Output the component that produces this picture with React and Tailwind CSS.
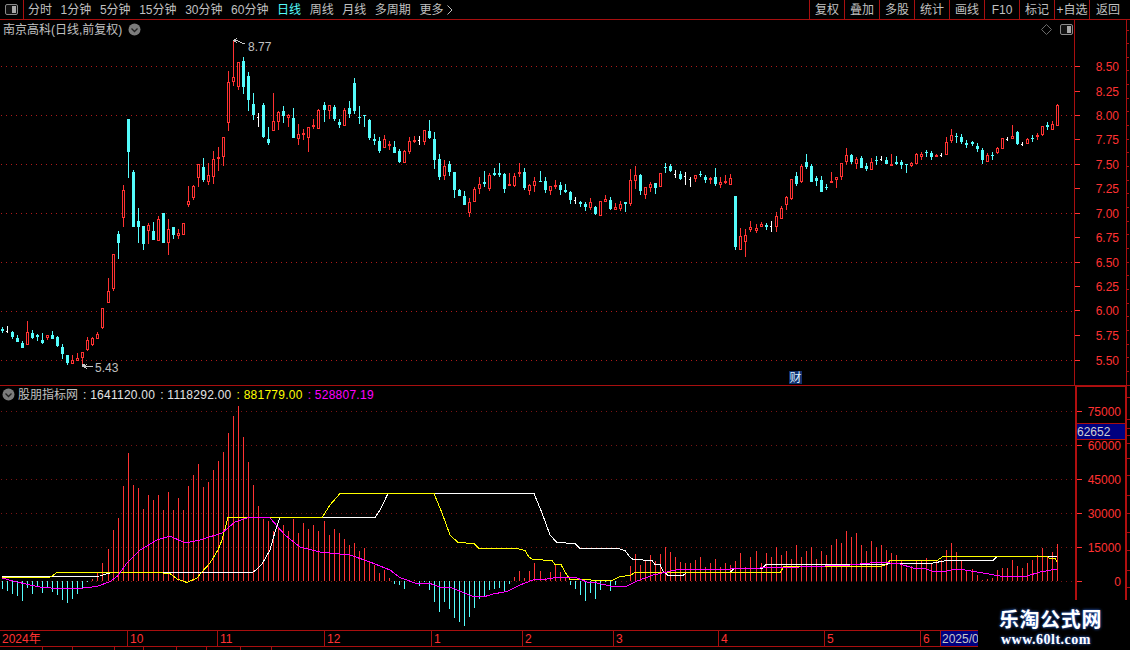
import React from "react";

const RED = "#ff3232";
const CYAN = "#54fcfc";
const LINE = "#a80f0f";

// [type, high, bodyTop, bodyBottom, low] in page pixels; c cyan, r hollow red, s solid red, w white doji
const C = [
["c",327,329,331,333],["w",326,331,332,333],["c",331,332,337,339],["c",335,338,342,342],["c",341,343,348,348],["r",321,332,345,345],["c",330,333,338,339],["c",334,335,337,341],["c",333,340,343,344],["r",335,335,338,340],["c",331,335,339,339],["c",336,337,346,347],["c",344,347,354,359],["c",355,355,363,365],["r",355,360,364,364],["r",353,358,361,361],["r",352,352,358,367],["r",337,340,350,351],["r",337,338,345,346],["r",332,334,339,339],["r",308,308,328,329],
["r",278,291,303,303],["r",254,254,289,291],["c",231,234,243,259],["r",185,190,218,227],["c",119,119,152,178],["c",170,172,227,227],["c",208,221,227,243],["c",226,226,244,250],["r",223,225,231,244],["c",222,231,240,240],["r",216,219,241,241],["c",213,213,243,243],["r",219,229,243,255],["c",227,227,235,239],["r",229,233,236,239],["r",223,223,235,235],["r",186,201,205,207],["r",185,186,198,200],["r",164,164,178,187],["c",158,167,180,182],["r",163,175,182,185],["r",151,159,177,184],["r",147,157,159,171],["r",137,137,157,166],["r",71,82,123,131],["r",40,77,82,86],["r",62,62,87,90],["c",57,61,87,94],["c",72,76,100,111],["c",93,104,115,120],["w",113,117,118,127],["c",103,105,137,138],["c",127,139,143,145],["r",93,121,131,131],["r",111,112,122,130],
["c",106,111,116,123],["r",114,115,118,127],["c",108,118,138,138],["r",124,134,139,145],["r",129,133,135,140],["r",127,127,138,152],["r",119,125,127,129],["r",109,110,129,129],
["c",102,105,110,122],["r",105,105,111,119],["c",105,107,119,121],["c",119,122,125,128],["r",108,110,126,126],["c",101,108,114,118],["c",78,83,111,114],["c",106,117,118,124],["c",115,115,116,127],["c",119,120,138,140],["c",134,139,141,145],["c",137,141,151,153],["r",135,139,148,148],["r",141,144,146,150],["c",141,147,153,153],["c",149,151,162,163],["r",150,151,163,163],["r",137,141,152,154],["r",136,140,142,143],["w",136,140,141,145],["r",130,130,142,145],["c",120,131,138,139],["c",132,139,160,169],["c",154,159,177,180],["r",160,166,176,180],["c",161,164,172,176],["c",172,172,190,198],["c",189,190,196,196],["c",191,196,205,205],["r",198,202,213,217],["r",187,189,202,202],["r",177,184,189,194],["c",171,182,184,187],["r",173,175,189,191],["c",168,173,175,176],["c",163,173,175,177],["c",173,174,189,193],["s",173,184,186,186],["r",173,176,186,187],["r",163,172,174,177],["c",168,172,188,190],["r",184,185,191,195],["r",177,181,186,192],
["c",171,181,182,182],["c",177,181,190,193],["r",186,186,191,195],["r",180,185,187,189],["c",182,185,190,195],["c",184,190,192,193],["c",191,192,200,204],["w",197,200,201,204],["c",201,202,204,207],
["c",202,204,207,211],["r",198,202,208,210],["c",206,207,214,215],["r",201,201,216,216],["r",195,199,202,202],["c",197,200,209,210],["r",203,207,210,210],["r",201,204,209,211],["c",202,202,204,212],["r",169,180,204,206],["r",166,175,181,189],["c",174,175,191,195],["r",187,187,195,199],["r",182,184,188,192],["c",183,183,188,194],["r",173,173,187,187],["c",163,167,168,173],["c",164,166,171,172],["w",170,174,175,178],["c",171,174,179,180],["w",172,176,177,185],["w",177,179,180,187],["r",175,175,179,182],["c",171,174,175,177],["c",175,177,180,183],["s",177,178,180,184],["c",168,177,184,186],["r",177,182,185,188],["s",175,181,183,184],["r",174,178,185,185],["c",196,196,247,250],["r",228,236,250,250],["r",229,235,242,257],["r",221,227,230,232],
["r",224,228,231,233],["r",222,224,227,227],["c",223,225,227,230],["w",221,226,227,232],["r",212,216,227,232],["r",206,208,219,219],["r",196,197,205,210],["r",179,179,199,200],["c",172,176,184,186],["r",164,166,182,183],["c",154,162,167,169],["c",164,166,182,182],["c",176,178,181,186],["c",176,180,192,192],["c",184,187,188,190],
["s",172,181,183,183],["r",177,177,180,188],["r",163,163,177,180],["r",148,155,162,165],["c",154,155,162,164],["r",157,159,164,169],["c",156,158,168,168],["c",163,166,169,171],["r",158,162,170,170],["c",156,160,161,165],["w",156,159,160,161],["c",157,160,164,164],["s",154,164,166,166],["c",156,162,164,165],["c",160,162,165,169],["c",164,164,165,173],["r",162,163,166,167],["r",153,154,164,164],["r",152,154,157,160],["c",150,152,153,157],["c",151,153,157,160],["s",154,155,157,157],["w",153,155,156,157],["r",137,142,155,155],["r",129,135,141,143],["c",133,136,137,143],["c",134,137,142,144],["c",140,143,145,148],
["c",141,142,144,146],["c",143,146,149,152],["c",148,150,160,164],["r",153,155,162,162],["c",152,155,156,160],["r",147,148,153,154],["r",138,138,149,149],["w",137,139,140,141],["r",125,136,139,139],["c",131,132,144,145],["w",142,144,145,146],["r",138,139,144,144],["c",135,138,139,142],["r",133,135,137,140],["r",126,126,135,136],["c",122,125,127,130],["r",121,124,130,130],["r",104,105,126,126],
];

const B = [-8,-10,-13,-15,-20,-7,-13,-6,-12,-6,-11,-14,-19,-22,-18,-13,-7,-1,2,8,18,
32,51,63,95,128,96,93,72,86,81,86,71,89,71,83,71,95,106,117,94,99,111,120,129,148,165,175,144,119,96,75,62,60,50,54,
56,50,62,48,58,52,56,50,60,46,52,48,42,36,38,30,33,20,16,8,11,3,-3,-4,
-8,-1,1,-5,-1,-9,-21,-31,-21,-28,-37,-41,-45,-36,-27,-18,-16,-9,-8,-7,-11,-3,4,10,3,10,18,10,3,9,16,9,3,-4,-8,-14,-20,-12,-18,-9,-1,-10,-4,0,0,15,27,16,20,26,20,27,34,29,24,19,18,18,21,
24,14,18,22,14,18,16,20,28,14,24,30,18,28,24,34,26,30,22,36,24,30,34,22,30,26,36,42,38,50,44,48,36,30,40,34,
36,31,28,26,20,13,15,20,20,23,17,20,21,31,38,29,20,11,12,6,1,2,3,11,13,13,21,15,13,18,21,26,33,25,29,37];

const xAt = (i) => 2 + 5 * i + (i >= 193 ? 5 : i >= 150 ? 4 : i >= 107 ? 3 : i >= 64 ? 2 : i >= 21 ? 1 : 0);

const WHITE = "2,577 100,576 106,574 112,572.5 252,572.5 256,570 262,564 270,550 275,532 280,517.5 375,517.5 380,510 388,493.5 534,493.5 542,513 550,535 557,542.5 575,543.5 580,548.5 618,548.5 625,550.5 630,557 633,559.5 652,560.5 655,564.5 660,564.5 663,571 668,575.5 683,575.5 687,572.5 730,572.5 734,568.5 762,568.5 766,564.5 885,564.5 890,563.5 930,563.5 947,560.5 993,560.5 997,556.5 1057,556.5";
const YELLOW = "2,577 50,577 52,576 57,572.5 155,572.5 170,573.5 177,579 187,582.5 197,578 201,573 210,563 218,550 222,540 226,525 228,517.5 322,517.5 330,505 340,493.5 434,493.5 442,513 450,535 458,542.5 474,543.5 479,548.5 517,548.5 525,550.5 529,557 533,559.5 552,560.5 555,564.5 561,564.5 565,572 570,579.5 612,580.5 620,576.5 630,575.5 635,572.5 780,572.5 784,566.5 880,566.5 885,565 890,560.5 937,560.5 943,556.5 1047,556.5 1050,558.5 1055,558.5 1057,561.5";
const MAGENTA = "2,578 15,581.5 30,585 43,587.5 67,589 83,588 97,586.5 110,581.5 117,576.5 127,563 140,550 157,540 170,536 185,543 200,540 222,533 235,522 250,517 270,518 285,535 300,547 320,552 350,555 370,562 390,570 400,577.5 415,583 430,583.5 440,587 450,587 463,592.5 473,596.5 485,596.5 493,594 507,591.5 520,585 533,580 547,579 560,577 577,578 587,582 597,583 610,586 627,586 637,581 653,575 667,572 680,569 700,570 760,568 800,567 850,565 880,562 900,564 913,568 923,568 935,572 947,571 955,569 965,570 980,572.5 1000,576 1027,576 1040,572 1057,569";

const F = "[font-family:'Liberation_Sans','Noto_Sans_CJK_SC',sans-serif]";

function Candle({ c, i }) {
  const [t, hi, top, bot, lo] = c;
  const x = xAt(i);
  if (t === "w") {
    return (
      <g fill="#ffffff">
        <rect x={x} y={hi} width="1" height={lo - hi} />
        <rect x={x - 1} y={top} width="1" height="1" />
      </g>
    );
  }
  const col = t === "c" ? CYAN : RED;
  const h = Math.max(bot - top, 1);
  return (
    <g>
      {t === "r" ? (
        <>
          <rect x={x} y={hi} width="1" height={top - hi} fill={col} />
          <rect x={x} y={bot} width="1" height={lo - bot} fill={col} />
          <rect x={x - 0.5} y={top + 0.5} width="2" height={Math.max(h - 1, 1)} fill="#000" stroke={col} />
        </>
      ) : (
        <>
          <rect x={x} y={hi} width="1" height={lo - hi} fill={col} />
          <rect x={x - 1} y={top} width="3" height={h} fill={col} />
        </>
      )}
    </g>
  );
}

const Dots = ({ y, color, w = 1075 }) => (
  <line x1="1" x2={w} y1={y} y2={y} stroke={color} strokeDasharray="1 4" />
);

const Chevron = () => (
  <svg width="13" height="13" viewBox="0 0 13 13" className="shrink-0">
    <circle cx="6.5" cy="6.5" r="6" fill="#7c7c7c" />
    <path d="M3.5 5.5 L6.5 8.5 L9.5 5.5" fill="none" stroke="#222" strokeWidth="1.3" />
  </svg>
);

const PanelIcon = ({ cls }) => (
  <svg width="13" height="11" viewBox="0 0 13 11" className={cls}>
    <rect x="0.5" y="0.5" width="12" height="10" rx="1.5" fill="#111" stroke="#8a8a8a" />
    <rect x="7" y="2" width="4" height="7" fill="#a8a8a8" />
  </svg>
);

const leftTabs = ["分时", "1分钟", "5分钟", "15分钟", "30分钟", "60分钟", "日线", "周线", "月线", "多周期", "更多"];
const rightBtns = ["复权", "叠加", "多股", "统计", "画线", "F10", "标记", "+自选"];

const priceTicks = [["8.50",67],["8.25",92],["8.00",116],["7.75",140],["7.50",165],["7.25",189],["7.00",214],["6.75",238],["6.50",263],["6.25",287],["6.00",311],["5.75",336],["5.50",361]];
const volTicks = [["75000",411],["60000",445],["45000",479],["30000",513],["15000",547],["0",581]];
const edgeTicks = [30,43,57,70,84,98,111,125,139,152,166,180,193,207,221,234,248,262,275,289,303,316,330,344,357,371,397,419,428,435,443,458,475,495,513,532,550,570,587];

const months = [
  ["w-[127px]", "2024年"], ["w-[90px]", "10"], ["w-[107px]", "11"], ["w-[107px]", "12"], ["w-[91px]", "1"],
  ["w-[91px]", "2"], ["w-[105px]", "3"], ["w-[106px]", "4"], ["w-[96px]", "5"], ["w-[20px]", "6"],
];

export default function App() {
  return (
    <div className={`relative w-[1130px] h-[650px] overflow-hidden bg-black text-[12px] leading-none text-[#c0c0c0] flex flex-col ${F}`}>
      {/* top toolbar */}
      <div className="h-5 shrink-0 flex border-b border-[#a80f0f]">
        <div className="w-6 flex items-center justify-center border-r border-[#a80f0f] pr-px">
          <PanelIcon />
        </div>
        <div className="flex items-center gap-[8.6px] pl-1 flex-1">
          {leftTabs.map((t, i) => (
            <span key={t} className={i === 6 ? "text-[#54fcfc]" : ""}>{t}</span>
          ))}
          <svg width="6" height="10" viewBox="0 0 6 10" className="-ml-[5px]">
            <path d="M0.5 0.5 L5 5 L0.5 9.5" fill="none" stroke="#c0c0c0" />
          </svg>
        </div>
        <div className="flex">
          {rightBtns.map((t) => (
            <div key={t} className="w-[35px] flex items-center justify-center border-l border-[#a80f0f] whitespace-nowrap">{t}</div>
          ))}
          <div className="w-[41px] flex items-center justify-center border-l border-[#a80f0f] pr-1">返回</div>
        </div>
      </div>

      {/* upper panel */}
      <div className="h-[366px] shrink-0 flex border-b border-[#a80f0f]">
        <div className="relative w-[1075px] shrink-0 border-r border-[#a80f0f]">
          <svg width="1075" height="365" viewBox="0 20 1075 365" shapeRendering="crispEdges" className="block">
            {[67, 116, 165, 214, 263, 312, 361].map((y) => (
              <Dots key={y} y={y - 0.5} color="#b01a1a" />
            ))}
            {C.map((c, i) => <Candle key={i} c={c} i={i} />)}
            <g fill="none" stroke="#c8c8c8">
              <path d="M233 40.5 H237 L243 43.5 H245 M234 40.5 L237 38 M234 40.5 L237 43" />
              <path d="M83 366.5 H93 M84 366.5 L87 364 M84 366.5 L87 369" />
            </g>
            <rect x="82" y="364" width="3" height="3" fill="#c8c8c8" />
            <g fill="#c0c0c0" fontSize="12" shapeRendering="auto">
              <text x="248" y="50.5">8.77</text>
              <text x="95" y="372">5.43</text>
            </g>
          </svg>
          <div className="absolute left-[3px] top-[3px] flex items-center gap-[6px]">
            <span>南京高科(日线,前复权)</span>
            <Chevron />
          </div>
          <div className="absolute right-[1px] top-[4px] flex items-center gap-[8px]">
            <svg width="11" height="11" viewBox="0 0 11 11">
              <path d="M5.5 0.5 L10.5 5.5 L5.5 10.5 L0.5 5.5 Z" fill="none" stroke="#6a6a6a" />
            </svg>
            <PanelIcon />
          </div>
          <div className="absolute left-[789px] top-[351px] w-[13px] h-[13px] bg-[#12306e] text-[#d8f0ff] flex items-center justify-center">财</div>
        </div>
        <svg width="55" height="365" viewBox="1076 20 55 365" className="block">
          {priceTicks.map(([t, y]) => (
            <g key={t}>
              <rect x="1076" y={y - 1} width="5" height="1" fill={RED} />
              <text x="1120" y={y + 4} fontSize="12" textAnchor="end" fill={RED}>{t}</text>
            </g>
          ))}
          <rect x="1127" y="20" width="1" height="365" fill={LINE} />
          {edgeTicks.filter((y) => y < 385).map((y) => (
            <rect key={y} x="1128" y={y} width="2" height="1" fill={LINE} />
          ))}
        </svg>
      </div>

      {/* lower panel */}
      <div className="h-[244px] shrink-0 flex">
        <div className="relative w-[1075px] shrink-0">
          <svg width="1075" height="244" viewBox="0 386 1075 244" shapeRendering="crispEdges" className="block">
            {[411, 445, 479, 513, 547, 581].map((y) => (
              <Dots key={y} y={y + 0.5} color="#7c1414" />
            ))}
            {B.map((h, i) =>
              h === 0 ? null : (
                <rect key={i} x={xAt(i)} y={h > 0 ? 581 - h : 581} width="1" height={Math.abs(h)} fill={h > 0 ? RED : CYAN} />
              )
            )}
            <polyline points={WHITE} fill="none" stroke="#ffffff" />
            <polyline points={YELLOW} fill="none" stroke="#ffff00" />
            <polyline points={MAGENTA} fill="none" stroke="#ff00ff" />
          </svg>
          <div className="absolute left-[2px] top-[2px] flex items-center whitespace-nowrap tracking-[0.25px]">
            <Chevron />
            <span className="ml-[3px] tracking-normal">股朋指标网</span>
            <span className="ml-[5px] text-[#e4e4e4]">: 1641120.00</span>
            <span className="ml-[5px] text-[#e4e4e4]">: 1118292.00</span>
            <span className="ml-[5px] text-[#ffff00]">: 881779.00</span>
            <span className="ml-[5px] text-[#ff00ff]">: 528807.19</span>
          </div>
        </div>
        <div className="relative w-[55px] shrink-0">
          <svg width="55" height="244" viewBox="1075 386 55 244" className="block">
            <rect x="1075" y="386" width="2" height="244" fill="#b00f0f" />
            <rect x="1125" y="386" width="2" height="244" fill="#b00f0f" />
            <rect x="1075" y="386" width="52" height="1" fill="#b00f0f" />
            {volTicks.map(([t, y]) => (
              <g key={t}>
                <rect x="1077" y={y} width="5" height="1" fill={RED} />
                <text x="1121" y={y + 4.5} fontSize="12" textAnchor="end" fill={RED}>{t}</text>
              </g>
            ))}
            {edgeTicks.filter((y) => y > 385).map((y) => (
              <rect key={y} x="1127" y={y} width="3" height="1" fill={LINE} />
            ))}
          </svg>
          <div className="absolute left-[2px] top-[37px] w-[48px] h-[17px] bg-[#000080] border-y border-[#a80f0f] text-[#d0d0d0] flex items-center">62652</div>
        </div>
      </div>

      {/* time axis */}
      <div className="relative h-[17px] w-[978px] shrink-0 flex border-y border-[#a80f0f] text-[#ff3232]">
        {months.map(([w, t], i) => (
          <div key={t} className={`${w} shrink-0 flex items-center pl-[2px] ${i ? "border-l border-[#a80f0f]" : ""}`}>{t}</div>
        ))}
        <div className="flex-1 bg-[#000080] border-l border-[#a80f0f] text-[#c8c8c8] flex items-center pl-px overflow-hidden whitespace-nowrap">2025/0</div>
      </div>
      <div className="flex-1 w-[978px] flex">
        {[43, 30, 42, 29, 33, 30, 34, 31].map((w, i) => (
          <div key={i} className="h-full border-r border-[#a80f0f] shrink-0" style={{ width: w }} />
        ))}
      </div>

      {/* watermark */}
      <div className="absolute left-[978px] top-[600px] w-[152px] h-[50px] bg-black text-white flex flex-col items-start pl-[21px]">
        <span className="mt-[8px] text-[20px] leading-[22px] font-bold tracking-[0.6px] [font-family:'Noto_Sans_CJK_SC',sans-serif] [text-shadow:0_0_3px_#3a7cff]">乐淘公式网</span>
        <span className="mt-[3px] ml-[2px] text-[14px] leading-[14px] font-bold tracking-[0.5px] [font-family:'Liberation_Serif',serif] [text-shadow:0_0_3px_#3a7cff]">www.60lt.com</span>
      </div>
    </div>
  );
}
